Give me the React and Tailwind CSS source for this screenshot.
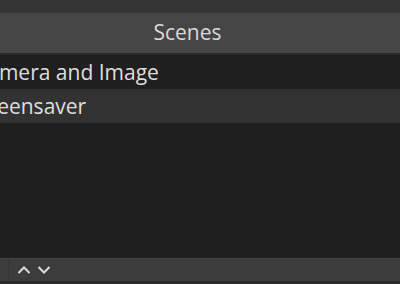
import React from "react";

const scenes = ["Camera and Image", "Screensaver"];

function App() {
  return (
    <div
      className="w-[400px] h-[284px] overflow-hidden flex flex-col bg-[#201f20] text-[#dedede]"
      style={{ fontFamily: '"Open Sans", "Noto Sans", sans-serif' }}
    >
      {/* top strip */}
      <div className="h-[13px] bg-[#353535]" />

      {/* dock title */}
      <div className="h-[40px] bg-[#464546] flex items-center justify-center text-[21px] text-[#d9d9d9]">
        <span className="ml-[-25px]">Scenes</span>
      </div>
      <div className="h-[2px] bg-[#2b2a2b]" />

      {/* scene list */}
      <div className="flex-1 flex flex-col">
        {scenes.map((name, i) => (
          <div
            key={name}
            className={
              "h-[34px] flex items-center pt-[2px] text-[21px] whitespace-nowrap " +
              (i === 1 ? "bg-[#333232]" : "bg-[#201f20]")
            }
          >
            <span className={i === 1 ? "ml-[-33px]" : "ml-[-26px]"}>{name}</span>
          </div>
        ))}
      </div>

      {/* toolbar */}
      <div className="h-[23px] bg-[#3c3c3c] flex items-center border-t border-[#444]">
        <div className="w-[9px] h-full border-r border-[#343434]" />
        <div className="flex items-center gap-[6px] ml-[8px] text-[#dcdcdc]">
          <svg width="14" height="10" viewBox="0 0 14 10" fill="none" stroke="currentColor" strokeWidth="2">
            <path d="M1.5 8 L7 2.5 L12.5 8" />
          </svg>
          <svg width="14" height="10" viewBox="0 0 14 10" fill="none" stroke="currentColor" strokeWidth="2">
            <path d="M1.5 2 L7 7.5 L12.5 2" />
          </svg>
        </div>
      </div>
      <div className="h-[3px] bg-[#2a2a2a]" />
    </div>
  );
}

export default App;
